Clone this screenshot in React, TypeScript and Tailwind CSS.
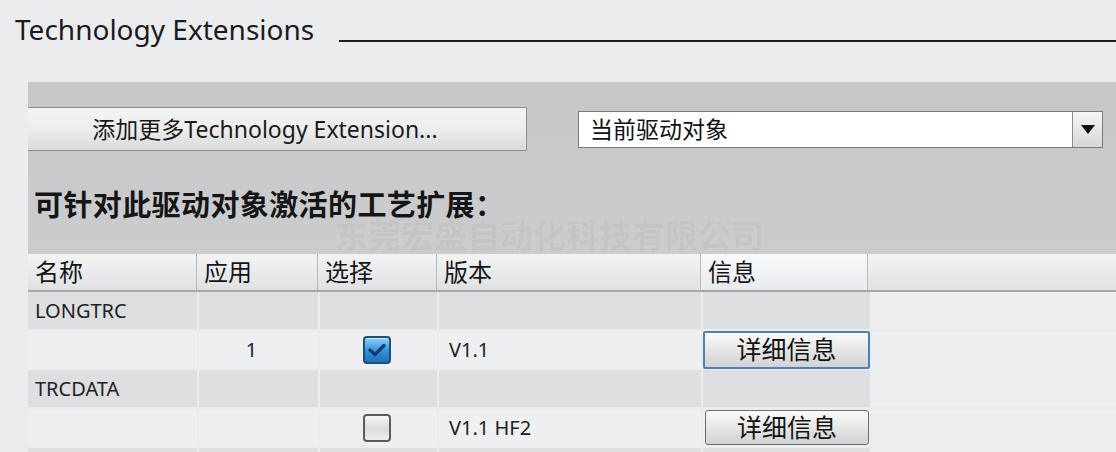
import React from "react";

const font = { fontFamily: '"Noto Sans", "Noto Sans CJK SC", sans-serif' };

const cols = ["w-[169px]", "w-[121px]", "w-[119px]", "w-[264px]", "w-[167px]"];

type Row = {
  name?: string;
  use?: string;
  checked?: boolean;
  version?: string;
  info?: boolean;
  focused?: boolean;
  dark?: boolean;
};

const rows: Row[] = [
  { name: "LONGTRC", dark: true },
  { use: "1", checked: true, version: "V1.1", info: true, focused: true },
  { name: "TRCDATA", dark: true },
  { checked: false, version: "V1.1 HF2", info: true },
  { dark: true },
];

function CheckBox({ checked }: { checked: boolean }) {
  if (checked) {
    return (
      <div className="flex h-[28px] w-[28px] items-center justify-center rounded-[4px] border-2 border-[#1d4f7c] bg-gradient-to-b from-[#8fd0f6] via-[#3596dc] to-[#1f6fb6] shadow-[inset_0_1px_0_#cfeaff]">
        <svg width="18" height="14" viewBox="0 0 18 14">
          <path d="M2 7 L7 11.5 L16 2.5" fill="none" stroke="#123a6b" strokeWidth="3.2" strokeLinecap="round" strokeLinejoin="round" />
        </svg>
      </div>
    );
  }
  return (
    <div className="h-[28px] w-[28px] rounded-[4px] border-2 border-[#5a5b5d] bg-gradient-to-b from-[#f7f7f7] via-[#dcdcdc] to-[#eeeeee]" />
  );
}

function InfoButton({ focused }: { focused?: boolean }) {
  return (
    <div
      className={
        focused
          ? "flex h-[38px] w-[167px] items-center justify-center rounded-[2px] border-2 border-[#4f7fc0] bg-gradient-to-b from-[#fbfbfb] via-[#e6e6e6] to-[#d2d2d2] text-[25px] leading-none text-[#111]"
          : "ml-[2px] flex h-[35px] w-[164px] items-center justify-center rounded-[3px] border border-[#6b6c6e] bg-gradient-to-b from-[#fbfbfb] via-[#e6e6e6] to-[#d2d2d2] text-[25px] leading-none text-[#111]"
      }
    >
      详细信息
    </div>
  );
}

export default function App() {
  return (
    <div className="relative h-[452px] w-[1116px] overflow-hidden bg-[#ebeced] text-[#1a1a1a]" style={font}>
      {/* title */}
      <div className="flex h-[82px] items-start pl-[15px] pt-[10px]">
        <span className="text-[28px] leading-[38px] text-[#1b1b1f]">Technology Extensions</span>
        <div className="ml-[25px] mt-[30px] h-[2px] flex-1 bg-[#1c1c1c]" />
      </div>

      {/* gray panel */}
      <div className="relative ml-[28px] h-[172px] bg-gradient-to-b from-[#c6c7c9] to-[#cbcccd]">
        <div className="flex items-start pt-[25px]">
          <div className="flex h-[44px] w-[499px] items-center justify-center border border-l-0 border-[#8d8e90] bg-gradient-to-b from-[#f4f4f4] via-[#ededed] to-[#d9dadb] pr-[24px] text-[23px] text-[#1a1a1a]">
            添加更多Technology Extension...
          </div>
          <div className="ml-[51px] mt-[4px] flex h-[37px] w-[525px] border border-[#7a7b7d] bg-white">
            <div className="flex flex-1 items-center pl-[11px] text-[23px] text-[#111]">当前驱动对象</div>
            <div className="flex w-[30px] items-center justify-center border-l border-[#8d8e90] bg-gradient-to-b from-[#f6f6f6] to-[#d6d7d8]">
              <svg width="14" height="9" viewBox="0 0 14 9">
                <path d="M0 0 H14 L7 9 Z" fill="#111" />
              </svg>
            </div>
          </div>
        </div>
        <div className="pl-[6px] pt-[40px] text-[29px] font-bold leading-[28px] tracking-[0.4px] text-[#151515]">
          可针对此驱动对象激活的工艺扩展：
        </div>
        {/* faint watermark */}
        <div className="pointer-events-none absolute left-[307px] top-[139px] text-[33px] font-bold leading-[30px] text-black/[0.045]">
          东莞宏盛自动化科技有限公司
        </div>
      </div>

      {/* table */}
      <div className="ml-[28px]">
        <div className="flex h-[38px] border-b-2 border-[#a7a8aa] bg-gradient-to-b from-[#f4f4f5] to-[#e0e1e2]">
          {["名称", "应用", "选择", "版本", "信息"].map((h, i) => (
            <div
              key={h}
              className={
                cols[i] +
                " flex items-center border-r border-[#b8b9bb] pl-[7px] text-[24px] leading-none text-[#151515] " +
                (i === 4 ? "bg-gradient-to-b from-[#f8f9fb] to-[#e8ebef]" : "")
              }
            >
              {h}
            </div>
          ))}
          <div className="flex-1" />
        </div>
        <div className="flex flex-col gap-[2px]">
          {rows.map((r, ri) => (
            <div key={ri} className="flex h-[37px]">
              <div className={cols[0] + " mr-[2px] flex items-center pl-[7px] text-[20px] text-[#222] " + (r.dark ? "bg-[#dedfe0]" : "bg-[#eeeff0]")}>
                {r.name}
              </div>
              <div className={"mr-[2px] flex w-[119px] items-center justify-center pr-[14px] text-[20px] text-[#222] " + (r.dark ? "bg-[#dedfe0]" : "bg-[#eeeff0]")}>
                {r.use}
              </div>
              <div className={"mr-[2px] flex w-[117px] items-center justify-center pr-[4px] " + (r.dark ? "bg-[#dedfe0]" : "bg-[#eeeff0]")}>
                {r.checked !== undefined && <CheckBox checked={r.checked} />}
              </div>
              <div className={"mr-[2px] flex w-[262px] items-center pl-[10px] text-[20px] text-[#222] " + (r.dark ? "bg-[#dedfe0]" : "bg-[#eeeff0]")}>
                {r.version}
              </div>
              <div className={"mr-[2px] flex w-[167px] items-center " + (r.dark ? "bg-[#dedfe0]" : "bg-[#eeeff0]")}>
                {r.info && <InfoButton focused={r.focused} />}
              </div>
              <div className="flex-1 bg-[#eeeff0]" />
            </div>
          ))}
        </div>
      </div>
    </div>
  );
}
